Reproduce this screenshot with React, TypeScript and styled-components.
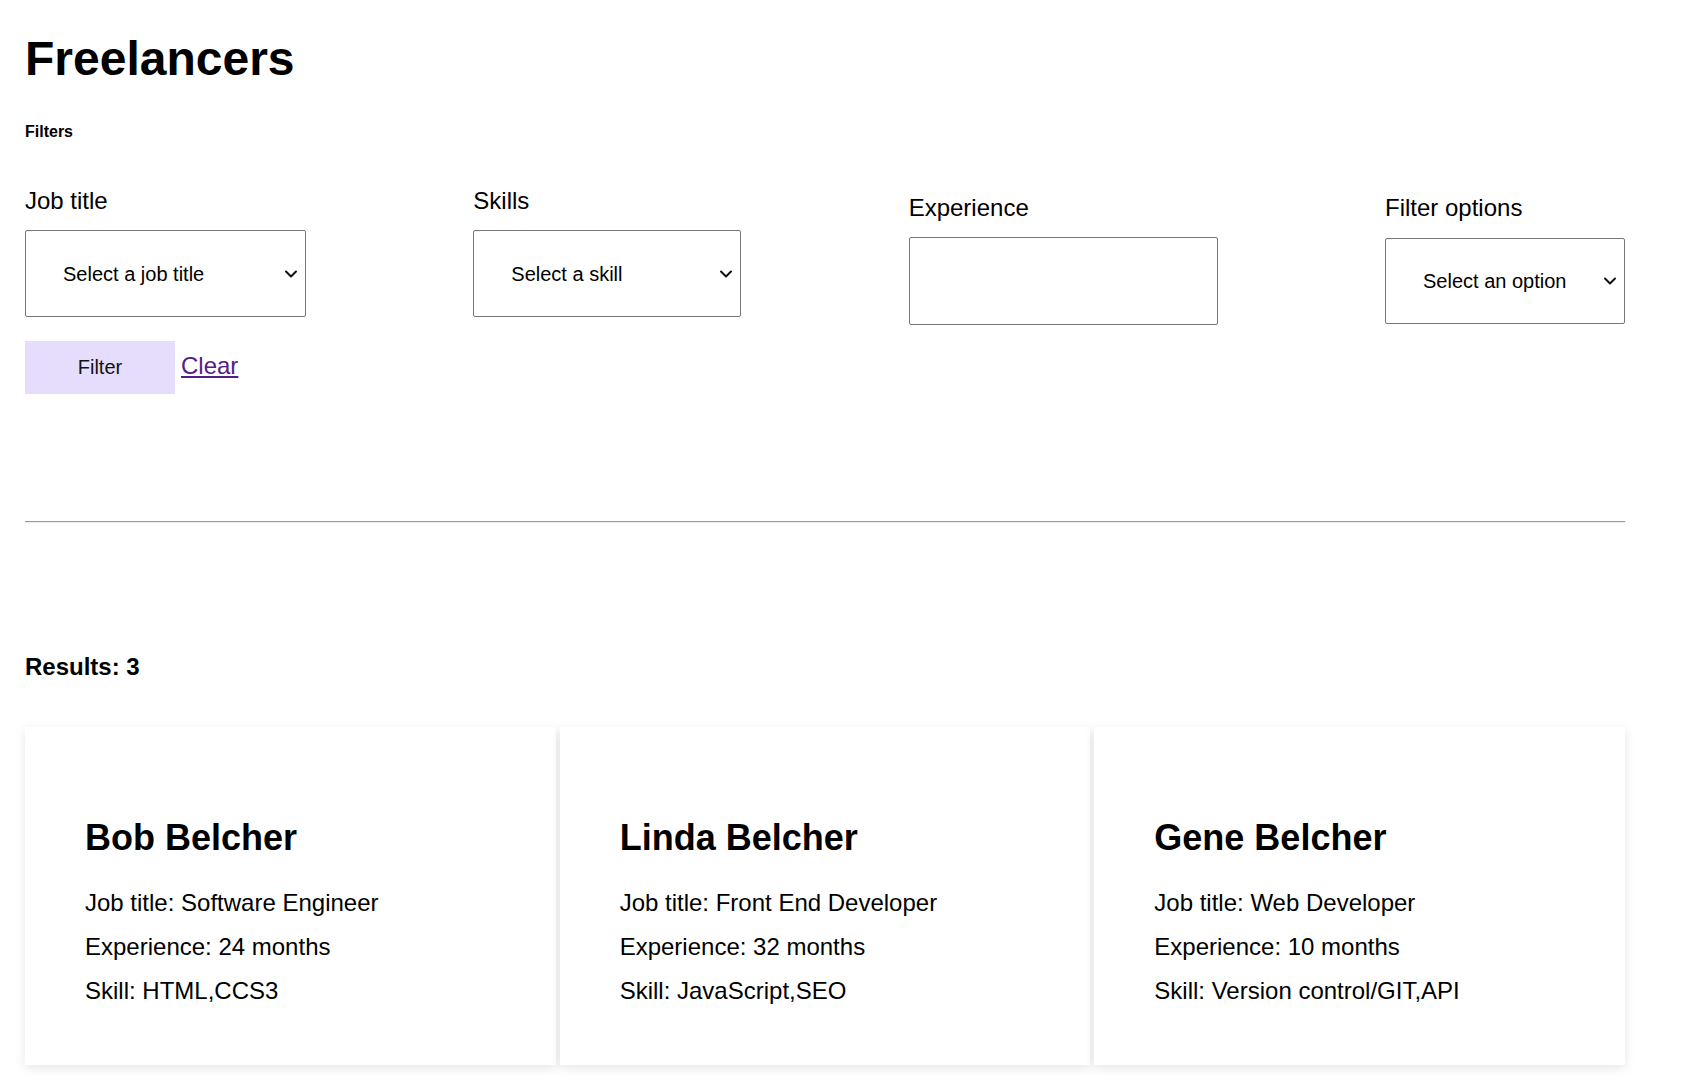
import React from "react";
import styled, { createGlobalStyle } from "styled-components";

const GlobalStyle = createGlobalStyle`
  html, body { margin: 0; padding: 0; background: #ffffff; }
  body {
    font-family: "Liberation Sans", Arial, Helvetica, sans-serif;
    color: #000000;
  }
  *, *::before, *::after { box-sizing: border-box; }
`;

const Page = styled.main`
  width: 1600px;
  margin-left: 25px;
  padding: 31px 0 16px;
`;

const Title = styled.h1`
  margin: 0;
  font-size: 48px;
  font-weight: 700;
  line-height: normal;
`;

const SectionLabel = styled.h3`
  margin: 37px 0 0;
  font-size: 16px;
  font-weight: 700;
  line-height: normal;
`;

const FilterForm = styled.form`
  display: flex;
  flex-direction: column;
  margin-top: 45.5px;
`;

const Fields = styled.div`
  display: flex;
  justify-content: space-between;
  align-items: flex-start;
`;

const Field = styled.div<{ $offset?: number }>`
  display: flex;
  flex-direction: column;
  margin-top: ${(p) => p.$offset ?? 0}px;
`;

const FieldLabel = styled.label`
  font-size: 24px;
  line-height: normal;
  margin-bottom: 15.5px;
`;

const SelectWrap = styled.div`
  position: relative;
  display: inline-flex;
`;

const Select = styled.select<{ $width: number; $height: number }>`
  appearance: none;
  -webkit-appearance: none;
  width: ${(p) => p.$width}px;
  height: ${(p) => p.$height}px;
  padding: 0 30px 0 37px;
  font-family: "Liberation Sans", Arial, Helvetica, sans-serif;
  font-size: 20px;
  color: #000;
  background: #fff;
  border: 1px solid #767676;
  border-radius: 2px;
  outline: none;
`;

const Chevron = styled.svg`
  position: absolute;
  right: 8px;
  top: 50%;
  transform: translateY(-50%);
  pointer-events: none;
`;

const TextInput = styled.input<{ $width: number; $height: number }>`
  width: ${(p) => p.$width}px;
  height: ${(p) => p.$height}px;
  padding: 0 12px;
  font-family: "Liberation Sans", Arial, Helvetica, sans-serif;
  font-size: 20px;
  border: 1px solid #767676;
  border-radius: 2px;
  outline: none;
`;

const Actions = styled.div`
  display: flex;
  align-items: baseline;
  gap: 6px;
  margin-top: 16px;
`;

const FilterButton = styled.button`
  width: 150px;
  height: 53px;
  padding: 0;
  border: none;
  background: #e6ddfd;
  color: #111;
  font-family: "Liberation Sans", Arial, Helvetica, sans-serif;
  font-size: 20px;
  cursor: pointer;
`;

const ClearLink = styled.a`
  font-size: 24px;
  color: #551a8b;
  text-decoration: underline;
`;

const Divider = styled.hr`
  margin: 127px 0 0;
  height: 0;
  border: 0;
  border-top: 1px solid #9c9c9c;
  border-bottom: 1px solid #ececec;
`;

const ResultsCount = styled.h3`
  margin: 130px 0 0;
  font-size: 24px;
  font-weight: 700;
  line-height: normal;
`;

const CardGrid = styled.section`
  display: grid;
  grid-template-columns: repeat(3, 1fr);
  gap: 4px;
  margin-top: 46px;
`;

const Card = styled.article`
  background: #fff;
  padding: 60px;
  box-shadow: 0 3px 10px rgba(0, 0, 0, 0.1);
`;

const CardName = styled.h2`
  margin: 30px 0;
  font-size: 36px;
  font-weight: 700;
  line-height: normal;
`;

const CardLine = styled.p`
  margin: 16px 0;
  font-size: 24px;
  line-height: normal;
  &:last-child { margin-bottom: 0; }
`;

const ChevronIcon = () => (
  <Chevron width="14" height="9" viewBox="0 0 14 9" fill="none">
    <path d="M2 2 L7 7 L12 2" stroke="#111" strokeWidth="2" strokeLinecap="round" strokeLinejoin="round" />
  </Chevron>
);

const freelancers = [
  { name: "Bob Belcher", job: "Software Engineer", exp: 24, skill: "HTML,CCS3" },
  { name: "Linda Belcher", job: "Front End Developer", exp: 32, skill: "JavaScript,SEO" },
  { name: "Gene Belcher", job: "Web Developer", exp: 10, skill: "Version control/GIT,API" },
];

export default function App() {
  return (
    <>
      <GlobalStyle />
      <Page>
        <Title>Freelancers</Title>
        <SectionLabel>Filters</SectionLabel>
        <FilterForm onSubmit={(e) => e.preventDefault()}>
          <Fields>
            <Field>
              <FieldLabel htmlFor="job">Job title</FieldLabel>
              <SelectWrap>
                <Select id="job" $width={281} $height={87} defaultValue="">
                  <option value="">Select a job title</option>
                  <option>Software Engineer</option>
                  <option>Front End Developer</option>
                  <option>Web Developer</option>
                </Select>
                <ChevronIcon />
              </SelectWrap>
            </Field>
            <Field>
              <FieldLabel htmlFor="skill">Skills</FieldLabel>
              <SelectWrap>
                <Select id="skill" $width={268} $height={87} defaultValue="">
                  <option value="">Select a skill</option>
                  <option>HTML</option>
                  <option>CCS3</option>
                  <option>JavaScript</option>
                  <option>SEO</option>
                  <option>Version control/GIT</option>
                  <option>API</option>
                </Select>
                <ChevronIcon />
              </SelectWrap>
            </Field>
            <Field $offset={7}>
              <FieldLabel htmlFor="experience">Experience</FieldLabel>
              <TextInput id="experience" type="text" $width={309} $height={88} />
            </Field>
            <Field $offset={7.5}>
              <FieldLabel htmlFor="options">Filter options</FieldLabel>
              <SelectWrap>
                <Select id="options" $width={240} $height={86} defaultValue="">
                  <option value="">Select an option</option>
                  <option>Less than</option>
                  <option>Greater than</option>
                </Select>
                <ChevronIcon />
              </SelectWrap>
            </Field>
          </Fields>
          <Actions>
            <FilterButton type="submit">Filter</FilterButton>
            <ClearLink href="#">Clear</ClearLink>
          </Actions>
        </FilterForm>
        <Divider />
        <ResultsCount>Results: {freelancers.length}</ResultsCount>
        <CardGrid>
          {freelancers.map((f) => (
            <Card key={f.name}>
              <CardName>{f.name}</CardName>
              <CardLine>Job title: {f.job}</CardLine>
              <CardLine>Experience: {f.exp} months</CardLine>
              <CardLine>Skill: {f.skill}</CardLine>
            </Card>
          ))}
        </CardGrid>
      </Page>
    </>
  );
}
